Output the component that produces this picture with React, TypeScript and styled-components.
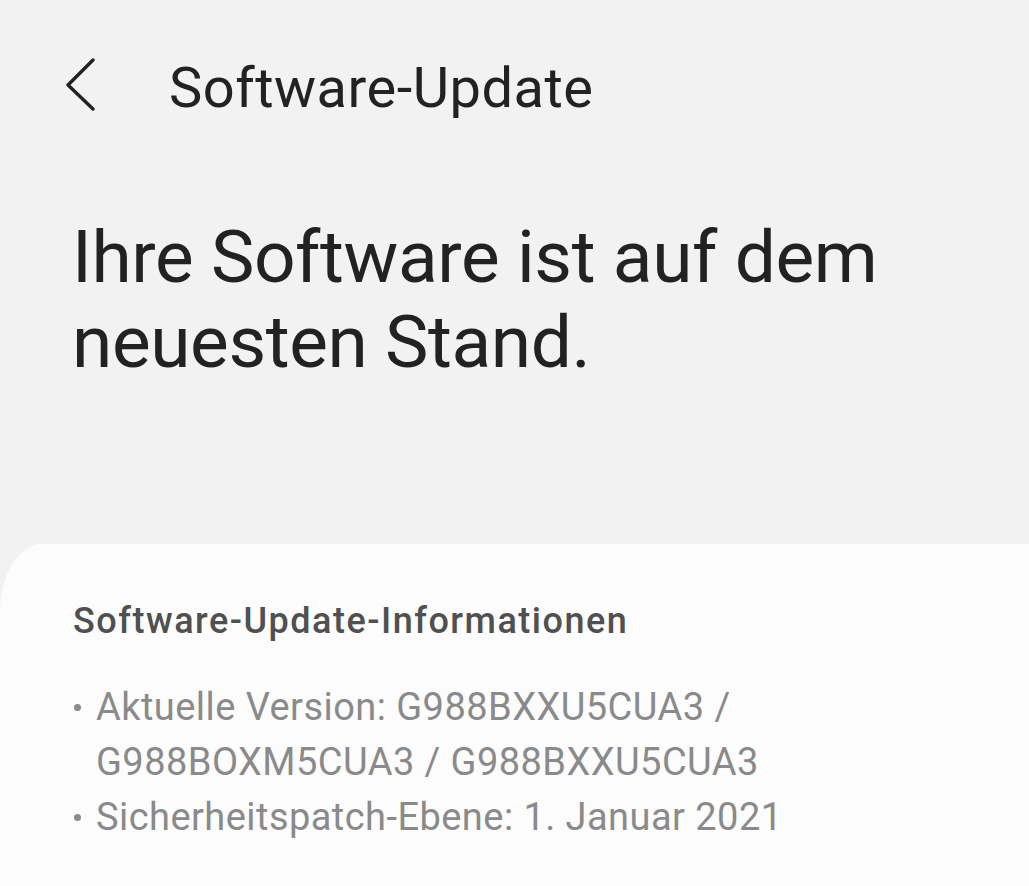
import React from "react";
import styled, { createGlobalStyle } from "styled-components";

const Global = createGlobalStyle`
  html, body {
    margin: 0;
    padding: 0;
    background: #f2f2f2;
  }
  body {
    width: 1029px;
    height: 886px;
    overflow: hidden;
    font-family: Roboto, "Noto Sans", Arial, sans-serif;
  }
`;

const Screen = styled.div`
  width: 1029px;
  height: 886px;
  display: flex;
  flex-direction: column;
  background: #f2f2f2;
  overflow: hidden;
`;

const Header = styled.header`
  display: flex;
  align-items: center;
  height: 90px;
  padding: 43px 0 0 65px;
`;

const BackButton = styled.button`
  display: flex;
  align-items: center;
  justify-content: flex-start;
  width: 104px;
  height: 90px;
  padding: 0;
  margin: 0;
  border: none;
  background: transparent;
  cursor: pointer;
  svg {
    margin-top: -8px;
  }
`;

const Title = styled.h1`
  margin: 0;
  font-size: 56px;
  line-height: 90px;
  font-weight: 400;
  color: #222222;
  letter-spacing: 0.5px;
`;

const Headline = styled.h2`
  margin: 82px 0 0 72px;
  font-size: 73px;
  line-height: 85px;
  font-weight: 400;
  color: #222222;
  letter-spacing: -0.4px;
`;

const Card = styled.section`
  margin-top: 159px;
  margin-right: -60px;
  flex: 1;
  background: #fcfcfc;
  border-radius: 42px 64px 0 0 / 68px 64px 0 0;
  padding: 57px 0 0 73px;
`;

const SectionTitle = styled.h3`
  margin: 0;
  font-size: 36px;
  line-height: 40px;
  font-weight: 500;
  color: #505050;
  letter-spacing: 1.5px;
`;

const InfoList = styled.ul`
  list-style: none;
  margin: 38.5px 0 0;
  padding: 0;
`;

const InfoItem = styled.li`
  display: grid;
  grid-template-columns: 23px auto;
  font-size: 38px;
  line-height: 55px;
  color: #8a8a8a;
  letter-spacing: 0.45px;
`;

const Bullet = styled.span`
  width: 7px;
  height: 7px;
  margin: 24px 0 0 1px;
  border-radius: 50%;
  background: #8a8a8a;
`;

const items = [
  ["Aktuelle Version: G988BXXU5CUA3 /", "G988BOXM5CUA3 / G988BXXU5CUA3"],
  ["Sicherheitspatch-Ebene: 1. Januar 2021"],
];

export default function App() {
  return (
    <Screen>
      <Global />
      <Header>
        <BackButton aria-label="Zurück">
          <svg width="32" height="54" viewBox="0 0 32 54" fill="none">
            <path
              d="M28 3 L3 28 L28 52"
              stroke="#222"
              strokeWidth="3.4"
              strokeLinecap="round"
              strokeLinejoin="round"
            />
          </svg>
        </BackButton>
        <Title>Software-Update</Title>
      </Header>
      <Headline>
        Ihre Software ist auf dem
        <br />
        neuesten Stand.
      </Headline>
      <Card>
        <SectionTitle>Software-Update-Informationen</SectionTitle>
        <InfoList>
          {items.map((lines, i) => (
            <InfoItem key={i}>
              <Bullet />
              <span>
                {lines.map((l, j) => (
                  <React.Fragment key={j}>
                    {j > 0 && <br />}
                    {l}
                  </React.Fragment>
                ))}
              </span>
            </InfoItem>
          ))}
        </InfoList>
      </Card>
    </Screen>
  );
}
